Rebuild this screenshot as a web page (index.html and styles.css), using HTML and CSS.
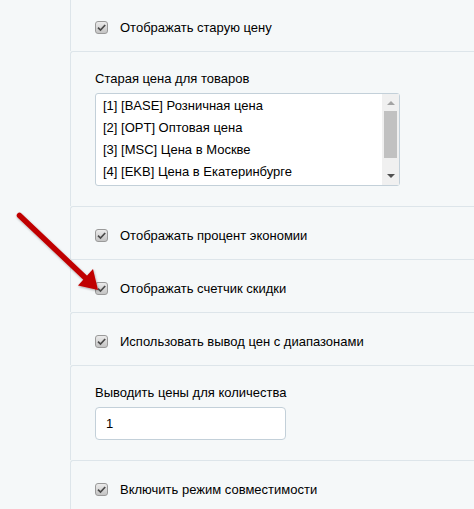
FILE: index.html
```html
<!DOCTYPE html>
<html lang="ru">
<head>
<meta charset="utf-8">
<link rel="stylesheet" href="styles.css">
</head>
<body>
<div class="page">
  <div class="panel">
    <div class="row row-first">
      <label class="check"><span class="cb"><svg viewBox="0 0 13 13" width="13" height="13"><path d="M3 6.6 L5.5 9 L10.2 4" fill="none" stroke="#4a4a4a" stroke-width="1.7"/></svg></span><span>Отображать старую цену</span></label>
    </div>
    <div class="row field">
      <div class="flabel">Старая цена для товаров</div>
      <div class="select">
        <div class="options">
          <div class="opt">[1] [BASE] Розничная цена</div>
          <div class="opt">[2] [OPT] Оптовая цена</div>
          <div class="opt">[3] [MSC] Цена в Москве</div>
          <div class="opt">[4] [EKB] Цена в Екатеринбурге</div>
        </div>
        <div class="scroll">
          <div class="arr-up"></div>
          <div class="thumb"></div>
          <div class="spacer"></div>
          <div class="arr-down"></div>
        </div>
      </div>
    </div>
    <div class="row">
      <label class="check"><span class="cb"><svg viewBox="0 0 13 13" width="13" height="13"><path d="M3 6.6 L5.5 9 L10.2 4" fill="none" stroke="#4a4a4a" stroke-width="1.7"/></svg></span><span>Отображать процент экономии</span></label>
    </div>
    <div class="row">
      <label class="check"><span class="cb"><svg viewBox="0 0 13 13" width="13" height="13"><path d="M3 6.6 L5.5 9 L10.2 4" fill="none" stroke="#4a4a4a" stroke-width="1.7"/></svg></span><span>Отображать счетчик скидки</span></label>
    </div>
    <div class="row">
      <label class="check"><span class="cb"><svg viewBox="0 0 13 13" width="13" height="13"><path d="M3 6.6 L5.5 9 L10.2 4" fill="none" stroke="#4a4a4a" stroke-width="1.7"/></svg></span><span>Использовать вывод цен с диапазонами</span></label>
    </div>
    <div class="row field">
      <div class="flabel">Выводить цены для количества</div>
      <div class="input">1</div>
    </div>
    <div class="row">
      <label class="check"><span class="cb"><svg viewBox="0 0 13 13" width="13" height="13"><path d="M3 6.6 L5.5 9 L10.2 4" fill="none" stroke="#4a4a4a" stroke-width="1.7"/></svg></span><span>Включить режим совместимости</span></label>
    </div>
  </div>
  <svg class="arrow" width="110" height="300" viewBox="0 0 110 300">
    <defs>
      <filter id="sh" x="-20%" y="-20%" width="140%" height="140%">
        <feDropShadow dx="0.5" dy="1" stdDeviation="1" flood-color="#000" flood-opacity="0.35"/>
      </filter>
    </defs>
    <g filter="url(#sh)">
      <line x1="19.5" y1="215.5" x2="86" y2="278.5" stroke="#c00000" stroke-width="5.5" stroke-linecap="round"/>
      <polygon points="98,290 78,285.5 93,269" fill="#c00000"/>
    </g>
  </svg>
</div>
</body>
</html>
```

FILE: styles.css
```css
html, body {
  margin: 0;
  padding: 0;
  background: #f5f8f9;
}
body {
  font-family: "Liberation Sans", Arial, sans-serif;
  font-size: 13px;
  color: #000;
}
.page {
  position: relative;
  width: 474px;
  height: 509px;
  overflow: hidden;
}
.panel {
  margin-left: 70px;
  display: flex;
  flex-direction: column;
}
.row {
  border-left: 1px solid #dde5ea;
  border-top: 1px solid #dde5ea;
  border-top-left-radius: 3px;
  padding: 22px 0 17px 24px;
}
.row-first {
  border-top: none;
  border-radius: 0;
  padding-top: 21px;
}
.check {
  display: flex;
  align-items: center;
  gap: 12px;
  height: 13px;
  line-height: 15px;
}
.cb {
  width: 13px;
  height: 13px;
  box-sizing: border-box;
  border: 1px solid #9a9a9a;
  border-radius: 3px;
  background: linear-gradient(#ebebeb, #c4c4c4);
  display: flex;
  align-items: center;
  justify-content: center;
  flex: none;
}
.cb svg {
  display: block;
  margin: -1px;
}
.field {
  padding-top: 19px;
  padding-bottom: 20px;
}
.flabel {
  line-height: 15px;
  margin-bottom: 7px;
}
.select {
  width: 305px;
  height: 93px;
  box-sizing: border-box;
  border: 1px solid #c3d0d9;
  border-radius: 3px;
  background: #fff;
  display: flex;
}
.options {
  flex: 1;
  padding-left: 7px;
  padding-top: 1px;
}
.opt {
  line-height: 22px;
  white-space: nowrap;
}
.scroll {
  width: 17px;
  background: #f0f0f0;
  display: flex;
  flex-direction: column;
  align-items: center;
}
.arr-up {
  margin-top: 7px;
  width: 0;
  height: 0;
  border-left: 4px solid transparent;
  border-right: 4px solid transparent;
  border-bottom: 4px solid #a3a3a3;
}
.thumb {
  margin-top: 6px;
  width: 13px;
  height: 47px;
  background: #c1c1c1;
}
.spacer {
  flex: 1;
}
.arr-down {
  margin-bottom: 7px;
  width: 0;
  height: 0;
  border-left: 4px solid transparent;
  border-right: 4px solid transparent;
  border-top: 4px solid #505050;
}
.input {
  width: 191px;
  height: 33px;
  box-sizing: border-box;
  border: 1px solid #c3d0d9;
  border-radius: 4px;
  background: #fff;
  padding-left: 10px;
  line-height: 31px;
}
.arrow {
  position: absolute;
  left: 0;
  top: 0;
}
```
